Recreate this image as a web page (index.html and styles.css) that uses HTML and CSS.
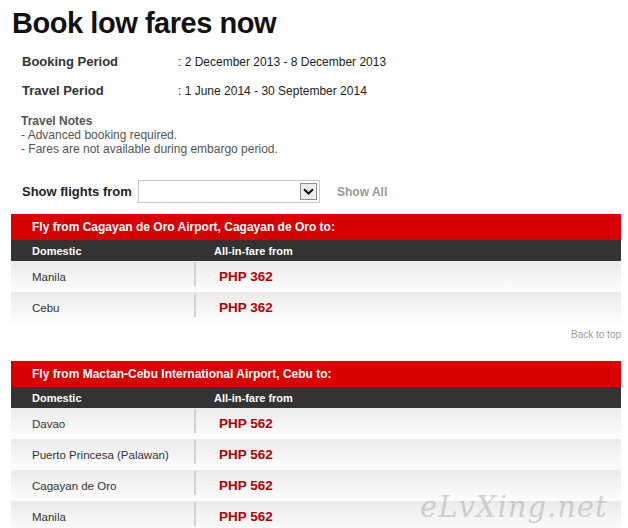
FILE: index.html
```html
<!DOCTYPE html>
<html>
<head>
<meta charset="utf-8">
<link rel="stylesheet" href="styles.css">
</head>
<body>
<div class="page">
  <h1 class="title">Book low fares now</h1>
  <div class="periods">
    <div class="period">
      <div class="plabel">Booking Period</div>
      <div class="pval">: 2 December 2013 - 8 December 2013</div>
    </div>
    <div class="period">
      <div class="plabel">Travel Period</div>
      <div class="pval">: 1 June 2014 - 30 September 2014</div>
    </div>
  </div>
  <div class="notes">
    <div class="notes-title">Travel Notes</div>
    <div>- Advanced booking required.</div>
    <div>- Fares are not available during embargo period.</div>
  </div>
  <div class="filter">
    <span class="flabel">Show flights from</span>
    <span class="select"><span class="sbtn"><svg width="11" height="7" viewBox="0 0 11 7"><path d="M1 1.2 L5.5 5.5 L10 1.2" fill="none" stroke="#111" stroke-width="2"/></svg></span></span>
    <span class="showall">Show All</span>
  </div>

  <div class="block">
    <div class="redbar">Fly from Cagayan de Oro Airport, Cagayan de Oro to:</div>
    <div class="head"><div class="c1">Domestic</div><div class="c2">All-in-fare from</div></div>
    <div class="row"><div class="c1">Manila</div><div class="c2"><span class="price">PHP 362</span></div></div>
    <div class="row"><div class="c1">Cebu</div><div class="c2"><span class="price">PHP 362</span></div></div>
  </div>
  <div class="totop">Back to top</div>

  <div class="block">
    <div class="redbar">Fly from Mactan-Cebu International Airport, Cebu to:</div>
    <div class="head"><div class="c1">Domestic</div><div class="c2">All-in-fare from</div></div>
    <div class="row"><div class="c1">Davao</div><div class="c2"><span class="price">PHP 562</span></div></div>
    <div class="row"><div class="c1">Puerto Princesa (Palawan)</div><div class="c2"><span class="price">PHP 562</span></div></div>
    <div class="row"><div class="c1">Cagayan de Oro</div><div class="c2"><span class="price">PHP 562</span></div></div>
    <div class="row"><div class="c1">Manila</div><div class="c2"><span class="price">PHP 562</span></div></div>
  </div>
  <div class="watermark">eLvXing.net</div>
</div>
</body>
</html>
```
FILE: styles.css
```css
html, body { margin: 0; padding: 0; background: #fff; }
body { font-family: "Liberation Sans", Arial, sans-serif; color: #333; overflow: hidden; }
.page { position: relative; width: 628px; height: 528px; overflow: hidden; }
.title { margin: 0; padding: 6px 0 0 12px; font-size: 29px; font-weight: bold; color: #111; line-height: 34px; letter-spacing: -0.45px; }
.periods { padding-top: 7px; }
.period { display: flex; align-items: center; height: 29px; padding-left: 22px; }
.plabel { width: 156px; font-size: 13px; font-weight: bold; color: #333; }
.pval { font-size: 12px; color: #222; }
.notes { padding: 9px 0 0 21px; font-size: 12px; line-height: 14px; color: #555; }
.notes-title { font-weight: bold; }
.filter { display: flex; align-items: center; padding: 24px 0 0 22px; height: 23px; }
.flabel { width: 116px; font-size: 13px; font-weight: bold; color: #222; }
.select { box-sizing: border-box; width: 182px; height: 23px; border: 1px solid #c9c9c9; background: #fff; display: flex; justify-content: flex-end; align-items: center; padding-right: 2px; }
.sbtn { box-sizing: border-box; width: 17px; height: 17px; border: 1px solid #8e8e8e; background: #eee; display: flex; align-items: center; justify-content: center; }
.showall { margin-left: 17px; font-size: 12px; font-weight: bold; color: #999; }
.block { margin: 11px 7px 0 11px; }
.redbar { height: 26px; background: #d90000; color: #fff; font-size: 12px; font-weight: bold; line-height: 26px; padding-left: 21px; }
.head { display: flex; height: 21px; background: #333; color: #fff; font-size: 11px; font-weight: bold; align-items: center; }
.head .c1 { width: 182px; padding-left: 21px; box-sizing: border-box; }
.head .c2 { padding-left: 21px; }
.row { display: flex; height: 31px; background: linear-gradient(#ebebeb, #fdfdfd); align-items: center; font-size: 11.5px; color: #333; }
.row .c1 { width: 183px; padding-left: 21px; box-sizing: border-box; }
.row .c2 { align-self: stretch; display: flex; align-items: center; border-left: 2px solid #d2d2d2; margin: 1px 0 6px 0; padding-left: 23px; }
.price { font-size: 13.5px; font-weight: bold; color: #b30000; margin-top: 5px; }
.totop { text-align: right; padding-right: 7px; font-size: 10px; color: #999; margin-top: 6px; height: 21px; }
.watermark { position: absolute; left: 420px; top: 490px; font-family: "DejaVu Serif", serif; font-style: italic; font-size: 29px; color: rgba(160,160,160,0.45); letter-spacing: 1px; }
```
